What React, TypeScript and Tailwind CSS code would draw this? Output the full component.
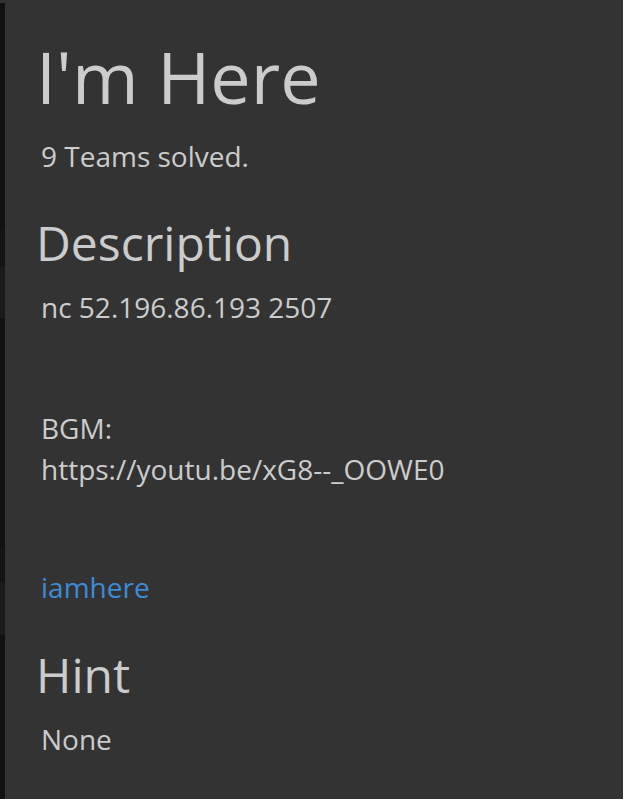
export default function App() {
  const strip = [
    { h: 3, c: "bg-[#333333]" },
    { h: 227, c: "bg-[#121111]" },
    { h: 37, c: "bg-[#151413]" },
    { h: 51, c: "bg-[#1c1b1b]" },
    { h: 229, c: "bg-[#121111]" },
    { h: 36, c: "bg-[#151413]" },
    { h: 52, c: "bg-[#1c1b1b]" },
    { h: 164, c: "bg-[#121111]" },
  ];

  return (
    <div className="flex h-[799px] w-[623px] overflow-hidden bg-[#333333] font-['Open_Sans',sans-serif] text-[#cccccc]">
      <div className="flex w-[5px] shrink-0 flex-col">
        {strip.map((s, i) => (
          <div key={i} className={s.c} style={{ height: s.h }} />
        ))}
      </div>

      <div className="flex-1 pl-[31px] pt-[33px]">
        <h1 className="text-[72px] leading-[86px]">I'm Here</h1>
        <p className="mt-[17px] pl-[5px] text-[28px] leading-[41px]">9 Teams solved.</p>

        <h3 className="mt-[36px] text-[48px] leading-[60px]">Description</h3>
        <div className="mt-[14px] pl-[5px] text-[28px] leading-[41px]">
          <p>nc 52.196.86.193 2507</p>
          <p className="mt-[80px]">BGM:</p>
          <p>https://youtu.be/xG8--_OOWE0</p>
          <a className="mt-[77px] block text-[#3d8bd6]" href="#">
            iamhere
          </a>
        </div>

        <h3 className="mt-[37px] text-[48px] leading-[60px]">Hint</h3>
        <p className="mt-[14px] pl-[5px] text-[28px] leading-[41px]">None</p>
      </div>
    </div>
  );
}
